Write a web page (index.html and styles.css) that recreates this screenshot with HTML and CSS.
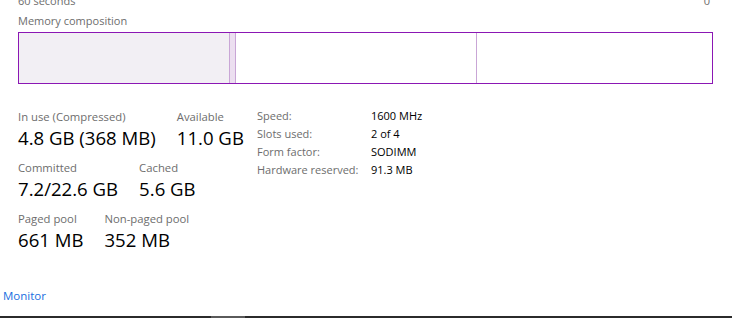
FILE: index.html
```
<!DOCTYPE html>
<html lang="en">
<head>
    <meta charset="UTF-8">
    <meta name="viewport" content="width=device-width, initial-scale=1.0">
    <title>Memory</title>
    <link rel="stylesheet" href="styles.css">
</head>
<body>
    <div id="memory-panel">
        <div class="axis">
            <span>60 seconds</span>
            <span>0</span>
        </div>
        <div class="section-title">Memory composition</div>
        <div class="composition">
            <div class="seg seg-used"></div>
            <div class="seg seg-modified"></div>
            <div class="seg seg-standby"></div>
            <div class="seg seg-free"></div>
        </div>

        <div class="stats">
            <div class="stat-grid">
                <div class="stat-row">
                    <div class="stat">
                        <div class="stat-label">In use (Compressed)</div>
                        <div class="stat-value">4.8 GB (368 MB)</div>
                    </div>
                    <div class="stat">
                        <div class="stat-label">Available</div>
                        <div class="stat-value">11.0 GB</div>
                    </div>
                </div>
                <div class="stat-row">
                    <div class="stat">
                        <div class="stat-label">Committed</div>
                        <div class="stat-value">7.2/22.6 GB</div>
                    </div>
                    <div class="stat">
                        <div class="stat-label">Cached</div>
                        <div class="stat-value">5.6 GB</div>
                    </div>
                </div>
                <div class="stat-row">
                    <div class="stat">
                        <div class="stat-label">Paged pool</div>
                        <div class="stat-value">661 MB</div>
                    </div>
                    <div class="stat">
                        <div class="stat-label">Non-paged pool</div>
                        <div class="stat-value">352 MB</div>
                    </div>
                </div>
            </div>

            <div class="details">
                <span class="detail-label">Speed:</span><span class="detail-value">1600 MHz</span>
                <span class="detail-label">Slots used:</span><span class="detail-value">2 of 4</span>
                <span class="detail-label">Form factor:</span><span class="detail-value">SODIMM</span>
                <span class="detail-label">Hardware reserved:</span><span class="detail-value">91.3 MB</span>
            </div>
        </div>
    </div>

    <div id="footer">
        <a href="#" class="monitor-link">Monitor</a>
    </div>
    <div id="scroll-track">
        <div class="scroll-thumb"></div>
    </div>
</body>
</html>
```

FILE: styles.css
```
body {
    margin: 0;
    height: 318px;
    overflow: hidden;
    background: #ffffff;
    font-family: "Open Sans", "Noto Sans", sans-serif;
    font-size: 11px;
    color: #000000;
    display: flex;
    flex-direction: column;
}
#memory-panel {
    padding: 0 19px 0 18px;
}
.axis {
    display: flex;
    justify-content: space-between;
    color: #6d6d6d;
    line-height: 16px;
    margin-top: -7px;
    padding-right: 3px;
}
.section-title {
    color: #6d6d6d;
    line-height: 16px;
    margin-top: 4px;
}
.composition {
    display: flex;
    height: 50px;
    margin-top: 3px;
    border: 1px solid #8b17b4;
}
.seg {
    height: 100%;
}
.seg-used {
    width: 210px;
    background: #f2eff4;
    border-right: 1px solid #c9a6d6;
}
.seg-modified {
    width: 5px;
    background: #ecdff0;
    border-right: 1px solid #c9a6d6;
}
.seg-standby {
    width: 240px;
    border-right: 1px solid #c9a6d6;
}
.seg-free {
    flex-grow: 1;
}
.stats {
    display: grid;
    grid-template-columns: 239px 1fr;
    margin-top: 25px;
}
.stat-row {
    display: flex;
    gap: 21px;
    margin-bottom: 11px;
}
.stat-label {
    color: #6d6d6d;
    font-size: 11.3px;
    line-height: 16px;
}
.stat-value {
    font-size: 18.6px;
    line-height: 24px;
    margin-top: 1px;
    margin-bottom: -1px;
}
.details {
    display: grid;
    grid-template-columns: 114px auto;
    grid-auto-rows: 18px;
    align-content: start;
    line-height: 18px;
    margin-top: -2px;
}
.detail-label {
    color: #6d6d6d;
}
#footer {
    flex-grow: 1;
    display: flex;
    align-items: flex-end;
    padding: 0 0 12px 3px;
}
.monitor-link {
    color: #1a6fe0;
    text-decoration: none;
    font-size: 11.5px;
    line-height: 16px;
}
#scroll-track {
    height: 2px;
    background: #2b2b2b;
}
.scroll-thumb {
    width: 34px;
    height: 100%;
    margin-left: 211px;
    background: #5a5a5a;
}
```
